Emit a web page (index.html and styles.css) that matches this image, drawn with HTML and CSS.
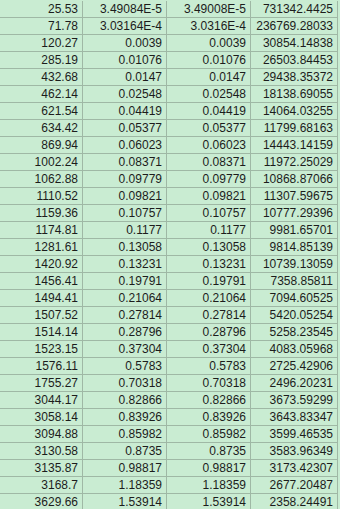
FILE: index.html
```html
<!DOCTYPE html>
<html>
<head>
<meta charset="utf-8">
<link rel="stylesheet" href="styles.css">
</head>
<body>
<div class="sheet">
<div class="c">25.53</div><div class="c">3.49084E-5</div><div class="c">3.49008E-5</div><div class="c">731342.4425</div>
<div class="c">71.78</div><div class="c">3.03164E-4</div><div class="c">3.0316E-4</div><div class="c">236769.28033</div>
<div class="c">120.27</div><div class="c">0.0039</div><div class="c">0.0039</div><div class="c">30854.14838</div>
<div class="c">285.19</div><div class="c">0.01076</div><div class="c">0.01076</div><div class="c">26503.84453</div>
<div class="c">432.68</div><div class="c">0.0147</div><div class="c">0.0147</div><div class="c">29438.35372</div>
<div class="c">462.14</div><div class="c">0.02548</div><div class="c">0.02548</div><div class="c">18138.69055</div>
<div class="c">621.54</div><div class="c">0.04419</div><div class="c">0.04419</div><div class="c">14064.03255</div>
<div class="c">634.42</div><div class="c">0.05377</div><div class="c">0.05377</div><div class="c">11799.68163</div>
<div class="c">869.94</div><div class="c">0.06023</div><div class="c">0.06023</div><div class="c">14443.14159</div>
<div class="c">1002.24</div><div class="c">0.08371</div><div class="c">0.08371</div><div class="c">11972.25029</div>
<div class="c">1062.88</div><div class="c">0.09779</div><div class="c">0.09779</div><div class="c">10868.87066</div>
<div class="c">1110.52</div><div class="c">0.09821</div><div class="c">0.09821</div><div class="c">11307.59675</div>
<div class="c">1159.36</div><div class="c">0.10757</div><div class="c">0.10757</div><div class="c">10777.29396</div>
<div class="c">1174.81</div><div class="c">0.1177</div><div class="c">0.1177</div><div class="c">9981.65701</div>
<div class="c">1281.61</div><div class="c">0.13058</div><div class="c">0.13058</div><div class="c">9814.85139</div>
<div class="c">1420.92</div><div class="c">0.13231</div><div class="c">0.13231</div><div class="c">10739.13059</div>
<div class="c">1456.41</div><div class="c">0.19791</div><div class="c">0.19791</div><div class="c">7358.85811</div>
<div class="c">1494.41</div><div class="c">0.21064</div><div class="c">0.21064</div><div class="c">7094.60525</div>
<div class="c">1507.52</div><div class="c">0.27814</div><div class="c">0.27814</div><div class="c">5420.05254</div>
<div class="c">1514.14</div><div class="c">0.28796</div><div class="c">0.28796</div><div class="c">5258.23545</div>
<div class="c">1523.15</div><div class="c">0.37304</div><div class="c">0.37304</div><div class="c">4083.05968</div>
<div class="c">1576.11</div><div class="c">0.5783</div><div class="c">0.5783</div><div class="c">2725.42906</div>
<div class="c">1755.27</div><div class="c">0.70318</div><div class="c">0.70318</div><div class="c">2496.20231</div>
<div class="c">3044.17</div><div class="c">0.82866</div><div class="c">0.82866</div><div class="c">3673.59299</div>
<div class="c">3058.14</div><div class="c">0.83926</div><div class="c">0.83926</div><div class="c">3643.83347</div>
<div class="c">3094.88</div><div class="c">0.85982</div><div class="c">0.85982</div><div class="c">3599.46535</div>
<div class="c">3130.58</div><div class="c">0.8735</div><div class="c">0.8735</div><div class="c">3583.96349</div>
<div class="c">3135.87</div><div class="c">0.98817</div><div class="c">0.98817</div><div class="c">3173.42307</div>
<div class="c">3168.7</div><div class="c">1.18359</div><div class="c">1.18359</div><div class="c">2677.20487</div>
<div class="c">3629.66</div><div class="c">1.53914</div><div class="c">1.53914</div><div class="c">2358.24491</div>
</div>
</body>
</html>
```
FILE: styles.css
```css
html, body {
  margin: 0;
  padding: 0;
  background: #c9ecd2;
  overflow: hidden;
}
.sheet {
  display: grid;
  grid-template-columns: 83px 84px 84px 87px;
  grid-auto-rows: 17px;
  padding-top: 1px;
  width: 340px;
  font-family: "Liberation Sans", Arial, sans-serif;
  font-size: 12px;
  color: #1c1c1c;
}
.c {
  box-sizing: border-box;
  border-right: 1px solid #9fb8a5;
  border-bottom: 1px solid #9fb8a5;
  text-align: right;
  padding-right: 4px;
  line-height: 16px;
  white-space: nowrap;
  overflow: hidden;
}
```
